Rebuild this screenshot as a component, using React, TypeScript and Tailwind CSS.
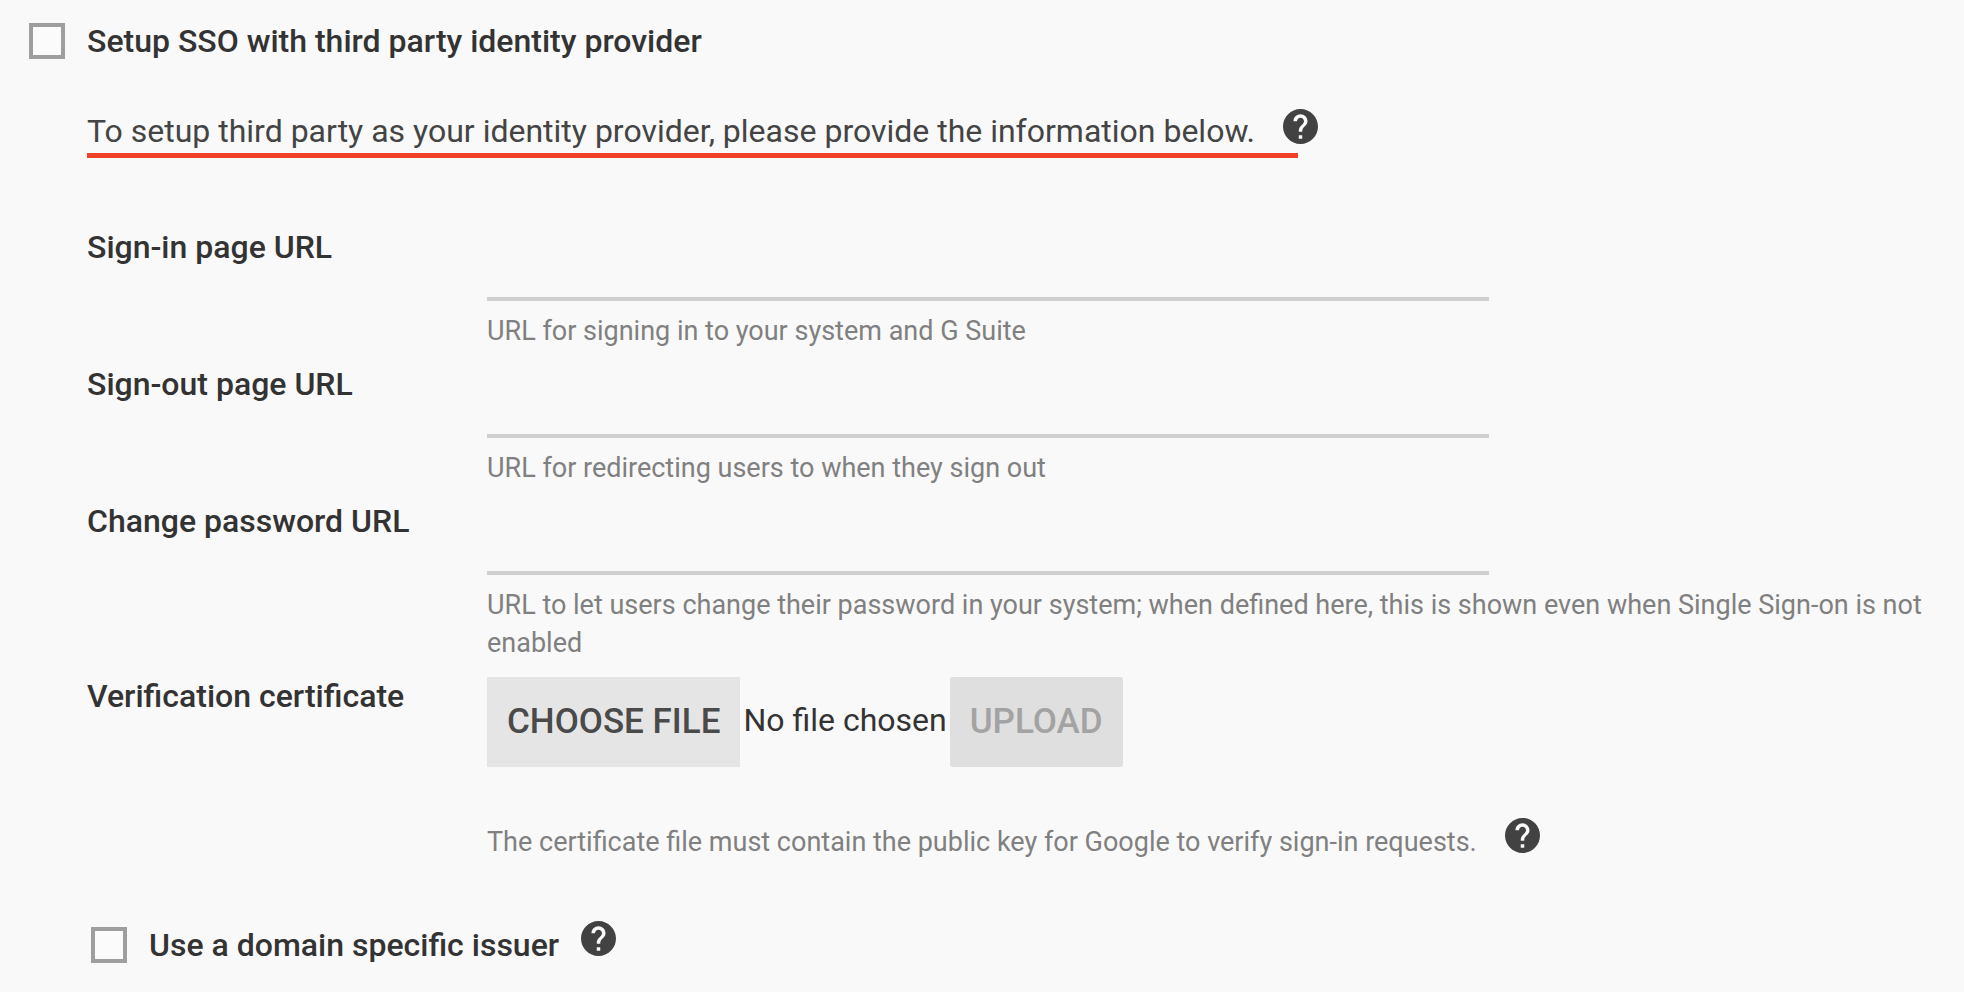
import { useRef, useState } from "react";

function HelpButton({ label }: { label: string }) {
  return (
    <button type="button" aria-label={label} className="shrink-0 text-[#424242]">
      <svg viewBox="2 2 20 20" className="block size-[35px]" fill="currentColor" aria-hidden="true">
        <path d="M12 2C6.48 2 2 6.48 2 12s4.48 10 10 10 10-4.48 10-10S17.52 2 12 2zm1 17h-2v-2h2v2zm2.07-7.75l-.9.92C13.45 12.9 13 13.5 13 15h-2v-.5c0-1.1.45-2.1 1.17-2.83l1.24-1.26c.37-.36.59-.86.59-1.41 0-1.1-.9-2-2-2s-2 .9-2 2H8c0-2.21 1.79-4 4-4s4 1.79 4 4c0 .88-.36 1.68-.93 2.25z" />
      </svg>
    </button>
  );
}

function CheckBox({ id }: { id: string }) {
  return (
    <input
      id={id}
      type="checkbox"
      className="size-9 shrink-0 appearance-none border-4 border-[#9e9e9e] bg-[#fbfbfb] checked:bg-[#616161]"
    />
  );
}

const urlFields = [
  { id: "sign-in", label: "Sign-in page URL", hint: "URL for signing in to your system and G Suite" },
  { id: "sign-out", label: "Sign-out page URL", hint: "URL for redirecting users to when they sign out" },
  {
    id: "change-password",
    label: "Change password URL",
    hint: "URL to let users change their password in your system; when defined here, this is shown even when Single Sign-on is not enabled",
  },
];

export default function App() {
  const fileInput = useRef<HTMLInputElement>(null);
  const [fileName, setFileName] = useState("");

  return (
    <main className="min-h-screen bg-[#f9f9f9] pt-[22px] pl-[29px] font-[Roboto,sans-serif] text-[32px] leading-[38px] text-[#333]">
      <form onSubmit={(e) => e.preventDefault()}>
        <div className="flex items-center gap-[22px]">
          <CheckBox id="sso" />
          <label htmlFor="sso" className="font-medium">
            Setup SSO with third party identity provider
          </label>
        </div>

        <div className="pl-[58px]">
          <div className="mt-12 flex items-start">
            <p className="mt-1 w-[1211px] border-b-[5px] border-[#ee4126] pb-[3px] text-[#444]">
              To setup third party as your identity provider, please provide the information below.
            </p>
            <div className="-ml-[15px] pt-px">
              <HelpButton label="About identity provider setup" />
            </div>
          </div>

          <div className="mt-[70px] grid grid-cols-[400px_minmax(0,1fr)] gap-y-[15px]">
            {urlFields.map((f) => (
              <div key={f.id} className="col-span-2 grid grid-cols-subgrid">
                <label htmlFor={f.id} className="font-medium">
                  {f.label}
                </label>
                <div>
                  <input
                    id={f.id}
                    type="url"
                    className="block h-[73px] w-full max-w-[1002px] border-b-4 border-[#cfcfcf] bg-transparent outline-none"
                  />
                  <p className="mt-[11px] text-[27px] text-[#808080]">{f.hint}</p>
                </div>
              </div>
            ))}

            <div className="font-medium">Verification certificate</div>
            <div>
              <div className="flex items-center">
                <button
                  type="button"
                  onClick={() => fileInput.current?.click()}
                  className="h-[90px] bg-[#e5e5e5] px-5 text-[35px] font-medium text-[#4a4a4a]"
                >
                  CHOOSE FILE
                </button>
                <input
                  ref={fileInput}
                  type="file"
                  aria-label="Verification certificate"
                  className="hidden"
                  onChange={(e) => setFileName(e.target.files?.[0]?.name ?? "")}
                />
                <span className="px-[3px] pb-1">{fileName || "No file chosen"}</span>
                <button
                  type="button"
                  disabled
                  className="h-[90px] rounded-[3px] bg-[#dfdfdf] px-5 text-[35px] font-medium text-[#a3a3a3]"
                >
                  UPLOAD
                </button>
              </div>
              <div className="mt-[51px] flex items-start gap-7">
                <p className="mt-[5px] text-[27px] text-[#808080]">
                  The certificate file must contain the public key for Google to verify sign-in requests.
                </p>
                <HelpButton label="About the certificate file" />
              </div>
            </div>
          </div>

          <div className="mt-[60px] flex items-start gap-[22px] pl-1">
            <div className="mt-[5px] flex items-center gap-[22px]">
              <CheckBox id="issuer" />
              <label htmlFor="issuer" className="font-medium">
                Use a domain specific issuer
              </label>
            </div>
            <HelpButton label="About domain specific issuers" />
          </div>
        </div>
      </form>
    </main>
  );
}
